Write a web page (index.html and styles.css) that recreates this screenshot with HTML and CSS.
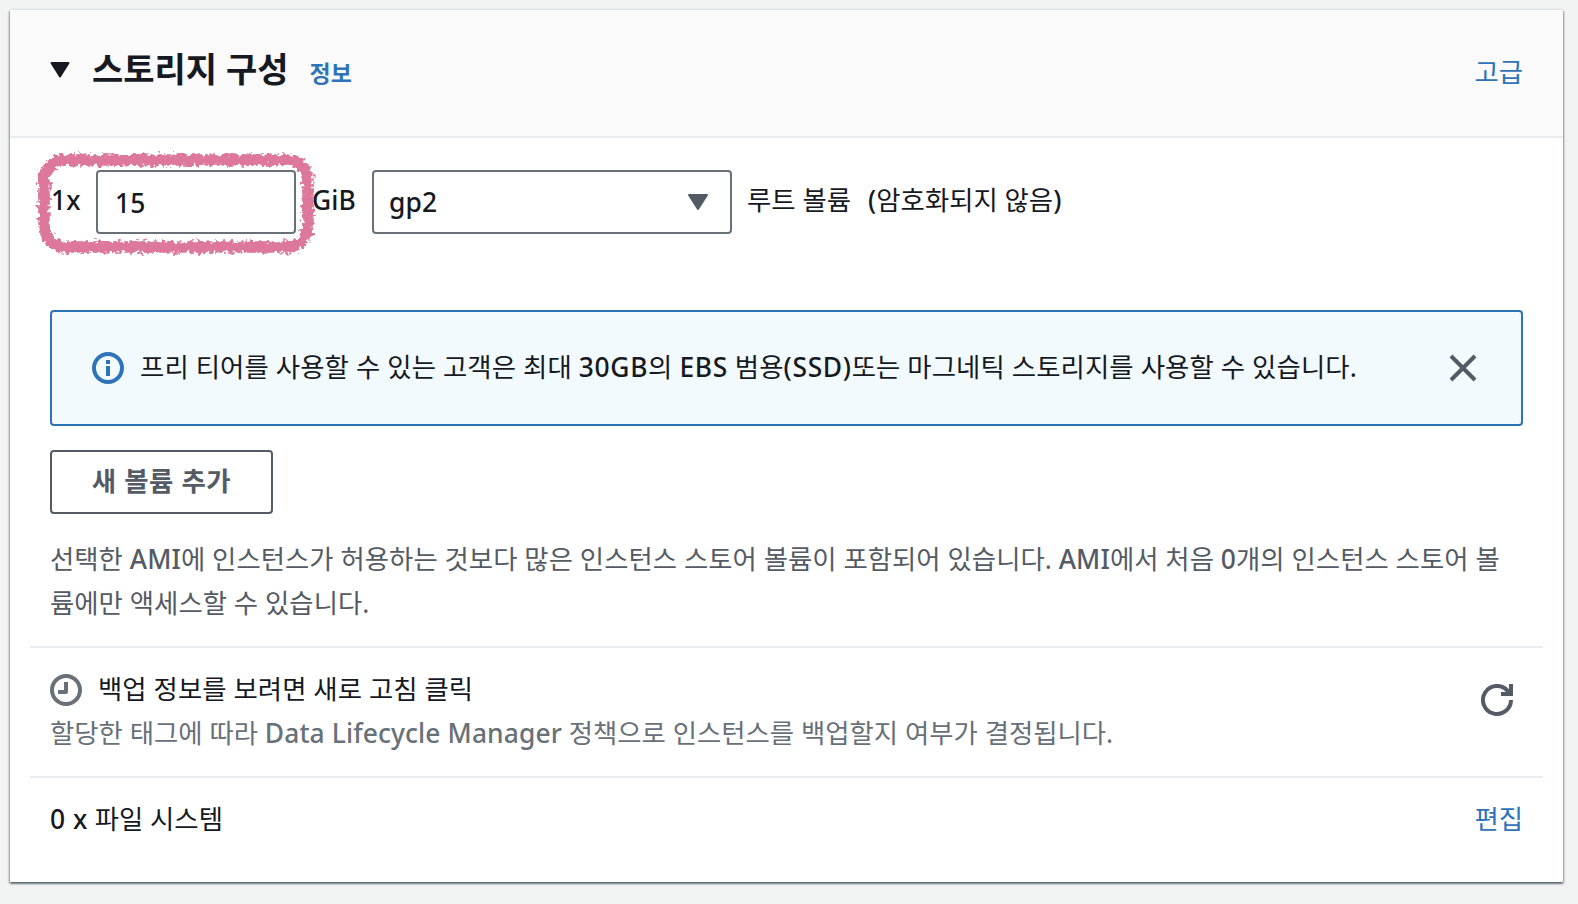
FILE: index.html
```html
<!DOCTYPE html>
<html lang="ko">
<head>
    <meta charset="UTF-8">
    <meta name="viewport" content="width=device-width, initial-scale=1">
    <title>스토리지 구성</title>
    <link rel="stylesheet" href="styles.css">
</head>
<body>
    <div class="card">
        <div class="card-header">
            <svg class="caret" width="20" height="16" viewBox="0 0 20 16"><path d="M1.5 1h17L10 14.5z" fill="#16191f" stroke="#16191f" stroke-width="2" stroke-linejoin="round"/></svg>
            <h2>스토리지 구성</h2>
            <a href="#" class="info">정보</a>
            <a href="#" class="right-link">고급</a>
        </div>

        <div class="volume-row">
            <span class="count en">1x</span>
            <input type="text" class="size en" value="15">
            <span class="unit en">GiB</span>
            <div class="select">
                <span class="en">gp2</span>
                <svg width="20" height="16" viewBox="0 0 20 16"><path d="M1 1h18L10 15z" fill="#545b64" stroke="#545b64" stroke-width="2" stroke-linejoin="round"/></svg>
            </div>
            <span class="root">루트 볼륨</span>
            <span class="encrypt"><span class="en">(</span>암호화되지 않음<span class="en">)</span></span>
            <svg class="marker" width="290" height="116" viewBox="0 0 290 116">
                <defs>
                    <filter id="crayon" x="0" y="0" width="290" height="116" filterUnits="userSpaceOnUse" color-interpolation-filters="sRGB">
                        <feTurbulence type="fractalNoise" baseFrequency="0.25" numOctaves="4" seed="4" result="noise"/>
                        <feDisplacementMap in="SourceGraphic" in2="noise" scale="10" xChannelSelector="R" yChannelSelector="G"/>
                    </filter>
                </defs>
                <g filter="url(#crayon)" fill="none" stroke="#dd779c">
                    <rect x="14" y="15" width="264" height="87" rx="21" stroke-width="11.5"/>
                </g>
            </svg>
        </div>

        <div class="alert">
            <svg width="32" height="32" viewBox="0 0 32 32"><circle cx="16" cy="16" r="14" fill="none" stroke="#2e73b8" stroke-width="4"/><path d="M14 8h4v4h-4zM14 14h4v10h-4z" fill="#2e73b8"/></svg>
            <p>프리 티어를 사용할 수 있는 고객은 최대 <span class="en">30GB</span>의 <span class="en">EBS</span> 범용<span class="en">(SSD)</span>또는 마그네틱 스토리지를 사용할 수 있습니다.</p>
            <svg class="close" width="28" height="28" viewBox="0 0 28 28"><path d="M2 2l24 24M26 2L2 26" stroke="#545b64" stroke-width="4"/></svg>
        </div>

        <button class="add">새 볼륨 추가</button>

        <p class="note">선택한 <span class="en">AMI</span>에 인스턴스가 허용하는 것보다 많은 인스턴스 스토어 볼륨이 포함되어 있습니다. <span class="en">AMI</span>에서 처음 <span class="en">0</span>개의 인스턴스 스토어 볼<br>륨에만 액세스할 수 있습니다.</p>

        <div class="section backup">
            <div>
                <div class="backup-title">
                    <svg width="32" height="32" viewBox="0 0 32 32" fill="none" stroke="#687078" stroke-width="4"><circle cx="16" cy="16" r="14"/><path d="M16 8v10H8" stroke-linejoin="round"/></svg>
                    <span>백업 정보를 보려면 새로 고침 클릭</span>
                </div>
                <p class="backup-text">할당한 태그에 따라 <span class="en">Data Lifecycle Manager</span> 정책으로 인스턴스를 백업할지 여부가 결정됩니다.</p>
            </div>
            <svg class="refresh" width="32" height="32" viewBox="0 0 32 32" fill="none" stroke="#545b64" stroke-width="4"><path d="M30 16a14 14 0 1 1-3.6-9.4L29 10"/><path d="M30 0v10H20"/></svg>
        </div>

        <div class="section files">
            <span><span class="en">0 x</span> 파일 시스템</span>
            <a href="#">편집</a>
        </div>
    </div>
</body>
</html>
```

FILE: styles.css
```css
* {
    box-sizing: border-box;
}

body {
    margin: 0;
    padding: 10px 15px 22px 10px;
    height: 904px;
    background-color: #f2f3f3;
    font-family: "Noto Sans", "Noto Sans CJK KR", sans-serif;
    font-size: 26.4px;
    line-height: 44px;
    color: #16191f;
    overflow: hidden;
}

p, h2 {
    margin: 0;
}

svg {
    display: block;
    flex-shrink: 0;
}

a {
    color: #2e73b8;
    text-decoration: none;
}

.en {
    font-weight: 500;
    letter-spacing: 0.1px;
}

.card {
    height: 872px;
    background-color: #fff;
    box-shadow: 0 2px 2px 0 rgba(0, 28, 36, 0.4), 1px 1px 2px 0 rgba(0, 28, 36, 0.3), -1px 1px 2px 0 rgba(0, 28, 36, 0.3), 0 -2px 0 0 #eaeded;
}

.card-header {
    display: flex;
    align-items: center;
    height: 128px;
    padding: 0 40px;
    background-color: #fafafa;
    border-bottom: 2px solid #eaeded;
}

.caret {
    margin-top: -7px;
}

h2 {
    margin: -8px 0 0 22px;
    font-size: 34px;
    font-weight: 700;
}

.info {
    margin: -1px 0 0 21px;
    font-size: 23px;
    font-weight: 700;
}

.right-link {
    margin-top: -3px;
    margin-left: auto;
}

.volume-row {
    position: relative;
    display: flex;
    align-items: center;
    height: 64px;
    margin: 32px 40px 76px;
}

.count {
    width: 46px;
    padding-left: 1px;
}

.count, .unit, .root, .encrypt {
    white-space: nowrap;
    margin-top: -5px;
}

.size {
    width: 200px;
    height: 64px;
    padding: 2px 17px 0;
    border: 2px solid #687078;
    border-radius: 4px;
    font: inherit;
    font-weight: 500;
    color: inherit;
}

.unit {
    width: 60px;
    margin-left: 16px;
}

.select {
    display: flex;
    align-items: center;
    justify-content: space-between;
    width: 360px;
    height: 64px;
    padding: 0 22px 0 15px;
    border: 2px solid #687078;
    border-radius: 4px;
}

.root {
    margin-left: 15px;
}

.encrypt {
    margin-left: 17px;
}

/* hand-drawn highlight around the size field */
.marker {
    position: absolute;
    left: -20px;
    top: -25px;
}

.alert {
    display: flex;
    align-items: center;
    height: 116px;
    margin: 0 40px 24px;
    padding: 0 44px 0 40px;
    border: 2px solid #2e73b8;
    border-radius: 4px;
    background-color: #f2fafd;
}

.alert p {
    margin-left: 16px;
    margin-top: -2px;
    white-space: nowrap;
    letter-spacing: 0.1px;
}

.alert .en {
    letter-spacing: 0.65px;
}

.close {
    margin-left: auto;
    margin-top: -1px;
}

.add {
    display: block;
    width: 223px;
    height: 64px;
    margin: 0 40px 24px;
    padding: 0 0 2px;
    border: 2px solid #545b64;
    border-radius: 4px;
    background-color: #fff;
    font: inherit;
    font-weight: 700;
    letter-spacing: 0.6px;
    color: #545b64;
}

.note {
    height: 108px;
    margin-top: -1px;
    margin-bottom: 1px;
    padding: 0 40px;
    color: #545b64;
    white-space: nowrap;
    letter-spacing: 0.02px;
}

.section {
    display: flex;
    justify-content: space-between;
    margin: 0 20px;
    padding: 20px;
    border-top: 2px solid #eaeded;
}

.backup {
    height: 130px;
}

.backup-title {
    display: flex;
    align-items: center;
    gap: 16px;
    height: 44px;
}

.backup-title span {
    margin-top: -2px;
    letter-spacing: 0.05px;
}

.backup-text {
    margin-top: -1px;
    color: #687078;
    white-space: nowrap;
}

.refresh {
    margin: 16px 10px 0 0;
}

.files {
    padding-top: 19px;
}

.files .en {
    letter-spacing: 0.5px;
}
```
